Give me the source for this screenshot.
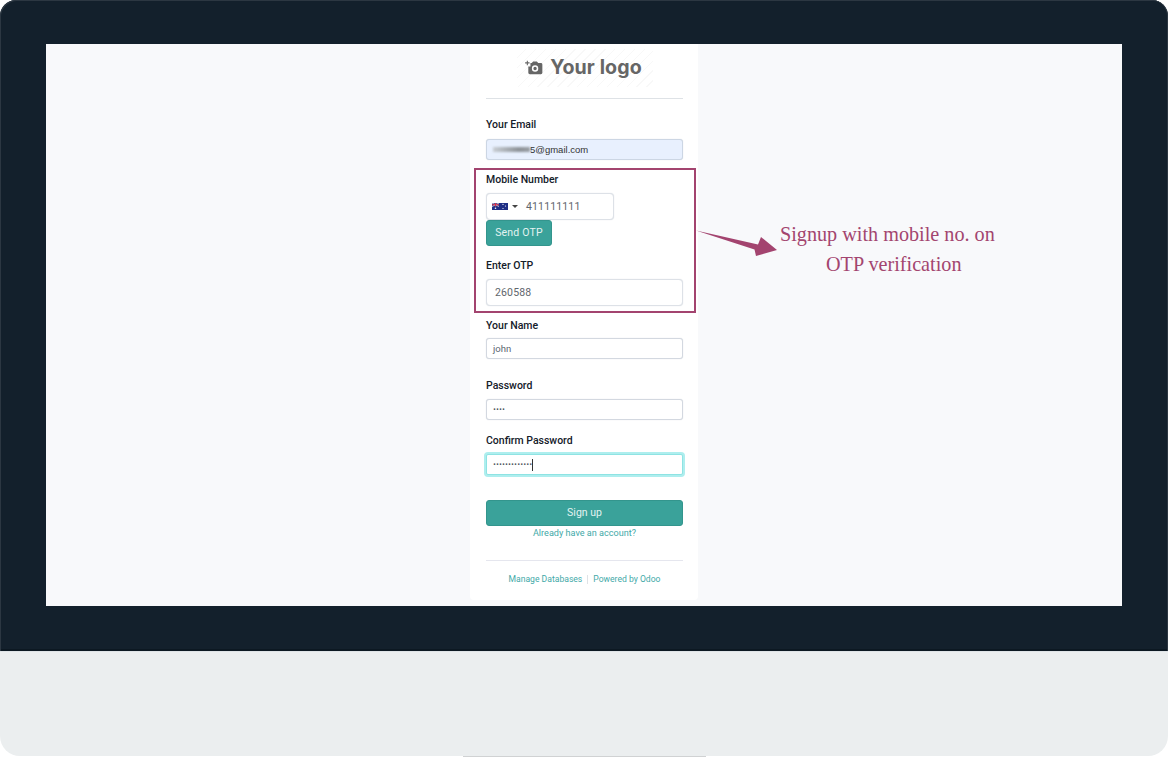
<script>
  const footerLinks = ['Manage Databases', 'Powered by Odoo'];
</script>

<div class="monitor">
  <div class="bezel">
    <div class="screen">
      <main class="card">
        <div class="logo">
          <div class="hatch">
            <svg class="cam" viewBox="0 0 20 18" width="18" height="16" aria-hidden="true">
              <path d="M0 3.2h5M2.5 .8v5" stroke="#666" stroke-width="1.2" fill="none"/>
              <path fill-rule="evenodd" fill="#666" d="M7.500 3.500 9 1.800h4.200l1.500 1.700h3.100a1.600 1.600 0 0 1 1.600 1.600v9.300a1.600 1.600 0 0 1-1.600 1.600H5.200a1.600 1.600 0 0 1-1.600-1.600V7.200h2.400V3.500zM11.200 6a3.600 3.600 0 1 0 0 7.200 3.600 3.600 0 0 0 0-7.200zm0 1.700a1.900 1.900 0 1 1 0 3.800 1.900 1.900 0 0 1 0-3.800z"/>
            </svg>
            <span>Your logo</span>
          </div>
        </div>

        <label class="lbl email-l">Your Email</label>
        <div class="field email">
          <span class="smudge"></span><span>5@gmail.com</span>
        </div>

        <section class="marked">
          <label class="lbl mob-l">Mobile Number</label>
          <div class="field big phone">
            <svg viewBox="0 0 16 7" width="16" height="7" aria-hidden="true">
              <rect width="16" height="7" fill="#1f2f85"/>
              <rect width="7" height="3.5" fill="#2b3a8c"/>
              <path d="M0 0 7 3.5M7 0 0 3.5" stroke="#e8dfe6" stroke-width=".8"/>
              <path d="M3.5 0v3.5M0 1.75h7" stroke="#d8324a" stroke-width="1"/>
              <circle cx="3.5" cy="5.3" r=".8" fill="#fff"/>
              <circle cx="11" cy="1.4" r=".6" fill="#fff"/>
              <circle cx="13.5" cy="3" r=".6" fill="#fff"/>
              <circle cx="11" cy="5.5" r=".6" fill="#fff"/>
            </svg>
            <i class="caret-down"></i>
            <span class="num">411111111</span>
          </div>
          <button class="btn send">Send OTP</button>
          <label class="lbl otp-l">Enter OTP</label>
          <div class="field big otp">260588</div>
        </section>

        <label class="lbl name-l">Your Name</label>
        <div class="field name">john</div>

        <label class="lbl pass-l">Password</label>
        <div class="field plain dots">····</div>

        <label class="lbl conf-l">Confirm Password</label>
        <div class="field plain dots focus">·············<b class="cursor"></b></div>

        <button class="btn signup">Sign up</button>
        <a class="already" href="#top">Already have an account?</a>

        <footer>
          <a href="#top">{footerLinks[0]}</a>
          <span class="sep"></span>
          <a href="#top">{footerLinks[1]}</a>
        </footer>
      </main>
    </div>

    <svg class="arrow" viewBox="0 0 84 28" width="84" height="28" aria-hidden="true">
      <path fill="#a3446f" d="M0 .5 62 14.500 65 7 81 20 60 26 58.500 19.500Z"/>
    </svg>
    <div class="note">
      <div>Signup with mobile no. on</div>
      <div class="second">OTP verification</div>
    </div>
  </div>
  <div class="chin"><span class="stand"></span></div>
</div>

<style>
  :global(body) {
    margin: 0;
    background: #fff;
  }
  * { box-sizing: border-box; }

  .monitor {
    width: 1168px;
    height: 757px;
    display: flex;
    flex-direction: column;
    font-family: Roboto, "Liberation Sans", sans-serif;
    overflow: hidden;
  }
  .bezel {
    position: relative;
    height: 651px;
    padding: 44px 46px 45px;
    background: #13202c;
    border-radius: 16px 16px 0 0;
    box-shadow: inset 1px 1px 0 #2c3742, inset -1px 0 0 #2c3742, inset 0 -2px 0 #0c1822;
  }
  .screen {
    height: 562px;
    background: #f8f9fb;
    display: flex;
    justify-content: center;
  }
  .chin {
    position: relative;
    flex: 1;
    background: #ebeeef;
    border-top: 1px solid #dfe4e7;
    border-radius: 0 0 20px 20px;
    margin-bottom: 1px;
  }
  .stand {
    position: absolute;
    left: 463px;
    width: 243px;
    bottom: -2px;
    height: 2px;
    background: #d0d2d3;
  }

  .card {
    width: 228px;
    height: 556px;
    padding: 0 15px 0 16px;
    background: #fff;
    border-radius: 0 0 4px 4px;
    display: flex;
    flex-direction: column;
    align-items: flex-start;
    color: #1f2a30;
  }

  .logo {
    align-self: stretch;
    height: 55px;
    border-bottom: 1px solid #dee2e6;
    display: flex;
    justify-content: center;
    align-items: flex-start;
    padding-top: 5px;
  }
  .hatch {
    width: 136px;
    height: 38px;
    padding-right: 2px;
    display: flex;
    align-items: center;
    justify-content: center;
    gap: 7px;
    background: repeating-linear-gradient(135deg, #fff 0 6px, #f8f8f8 6px 7px);
    color: #666;
    font: 700 19.6px/1 Inter, sans-serif;
    letter-spacing: .1px;
  }
  .cam { flex: none; }

  .lbl {
    display: block;
    font-size: 10.5px;
    font-weight: 500;
    line-height: 14px;
    color: #14202a;
  }
  .email-l { margin: 19px 0 7px; }
  .mob-l { margin: 1px 0 6px; }
  .otp-l { margin: 13px 0 6px; }
  .name-l { margin: 6px 0 5px; }
  .pass-l { margin: 20px 0 6px; }
  .conf-l { margin: 14px 0 6px; }

  .field {
    width: 197px;
    height: 21px;
    border: 1px solid #d3d8e0;
    border-radius: 3px;
    background: #fff;
    box-shadow: 0 0 1px #cfd5dd;
    display: flex;
    align-items: center;
    padding: 0 6px;
    font-size: 9.5px;
    color: #5c6670;
    white-space: nowrap;
  }
  .email {
    background: #e8f0fe;
    color: #333;
    font-family: "Liberation Sans", sans-serif;
    border-color: #ccd6e4;
  }
  .smudge {
    width: 37px;
    height: 5px;
    background: linear-gradient(90deg, #c9ced4, #8d9298 70%, #9a9fa5);
    filter: blur(1px);
  }
  .plain { font-weight: 700; font-size: 10px; color: #4a525a; }
  .big {
    height: 27px;
    padding: 0 8px;
    font-size: 10.5px;
    letter-spacing: .15px;
    color: #5f666d;
    border-color: #dde1e7;
    border-radius: 4px;
  }
  .phone {
    width: 128px;
    padding-left: 5px;
  }
  .caret-down {
    width: 0;
    height: 0;
    margin-left: 4px;
    border: 3px solid transparent;
    border-top: 3px solid #444;
    border-bottom: 0;
  }
  .num { margin-left: 8px; }

  .marked {
    margin: 8px -13px 0 -12px;
    width: 222px;
    height: 145px;
    padding: 2px 10px 0;
    border: 2px solid #a3446f;
  }

  .focus {
    border-color: #8fe3e3;
    box-shadow: 0 0 0 2px #aeeeee;
    border-radius: 2px;
  }
  .cursor {
    display: inline-block;
    width: 1px;
    height: 12px;
    background: #333;
  }

  .btn {
    display: block;
    border: 1px solid #33958d;
    border-radius: 3px;
    background: #3aa29a;
    color: #e3f3f1;
    font: 400 10.5px/1 Roboto, sans-serif;
    height: 26px;
    padding: 0;
  }
  .send { width: 66px; letter-spacing: .2px; }
  .signup { width: 197px; margin-top: 25px; }

  a {
    color: #3fa9a8;
    text-decoration: none;
    font-size: 8.6px;
    line-height: 12px;
  }
  .already {
    align-self: stretch;
    margin-top: 1px;
    text-align: center;
    font-size: 9.1px;
  }
  footer {
    align-self: stretch;
    margin-top: 21px;
    padding-top: 12px;
    border-top: 1px solid #e5e6ee;
    display: flex;
    justify-content: center;
    align-items: center;
    gap: 5px;
  }
  .sep {
    width: 1px;
    height: 9px;
    background: #dfe2e6;
  }

  .arrow {
    position: absolute;
    left: 696px;
    top: 230px;
  }
  .note {
    position: absolute;
    left: 780px;
    top: 219px;
    font: 400 20.2px/30px "Liberation Serif", serif;
    color: #a3456f;
    white-space: nowrap;
  }
  .second { padding-left: 46px; }
</style>
